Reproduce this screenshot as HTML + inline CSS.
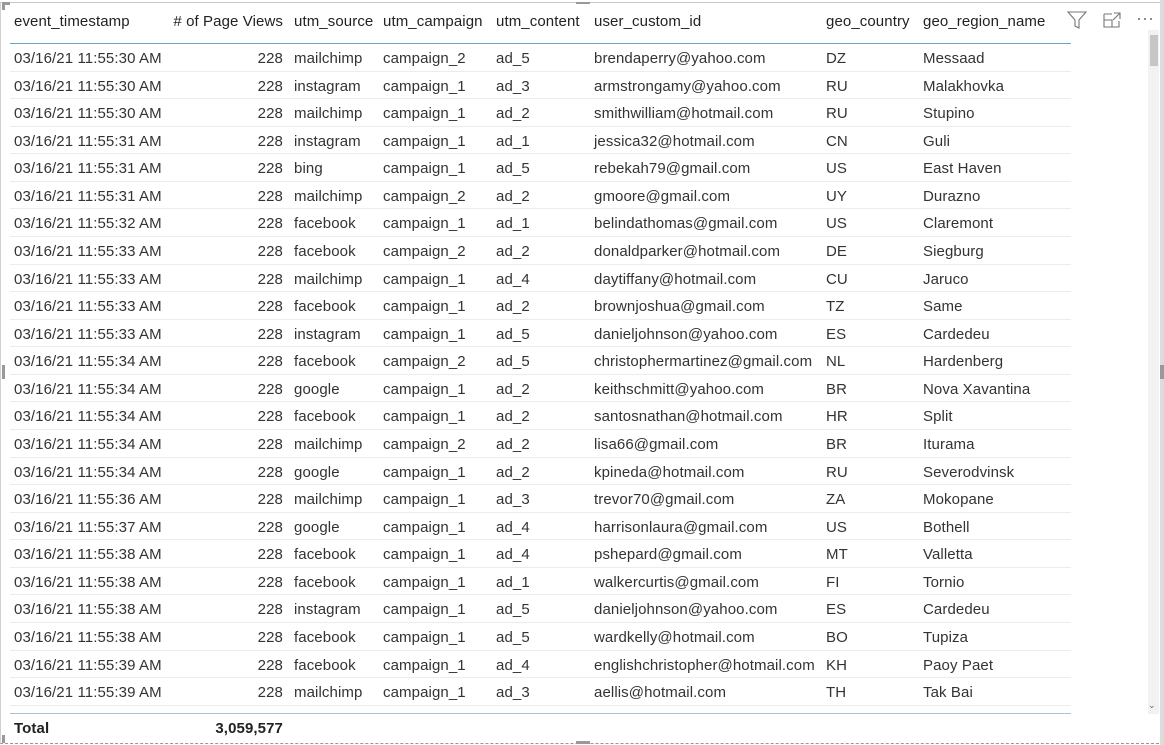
<!DOCTYPE html>
<html><head><meta charset="utf-8"><style>
*{margin:0;padding:0;box-sizing:border-box}
body{width:1164px;height:745px;background:#fff;position:relative;overflow:hidden;font-family:"Liberation Sans",sans-serif;font-size:15px;letter-spacing:0.1px;color:#333}
.frame{position:absolute;left:0;top:2px;width:1164px;height:742px;border-top:1px solid #c8c8c8;border-left:1px solid #d0d0d0;border-bottom:1px dashed #999}
.r{position:absolute;left:10px;width:1061px;height:27.57px;border-bottom:1px solid #ececec}
.r span{position:absolute;top:1px;line-height:27px;white-space:nowrap}
.c1{left:4px}.c2{right:788px;text-align:right}.c3{left:284px}.c4{left:373px}.c5{left:486px}.c6{left:584px}.c7{left:816px}.c8{left:913px}
.h{top:6px;height:38px;border-bottom:1.5px solid #6aa4c6;color:#222}
.h span{line-height:30px}
.t{top:713px;height:28px;border-top:1px solid #9fc6da;border-bottom:none;font-weight:bold;color:#222}
.sb{position:absolute;left:1148px;top:30px;width:11px;height:684px;background:#f2f2f2}
.th{position:absolute;left:1150px;top:35px;width:8px;height:31px;background:#c6c6c6}
.edge{position:absolute;left:1160px;top:0;width:4px;height:745px;background:#dcdcdc}
</style></head><body>
<div class="frame"></div>
<div class="edge"></div>
<div style="position:absolute;left:2px;top:2px;width:8px;height:3px;background:#999"></div>
<div style="position:absolute;left:2px;top:2px;width:3px;height:8px;background:#999"></div>
<div style="position:absolute;left:2px;top:735px;width:3px;height:8px;background:#999"></div>
<div style="position:absolute;left:2px;top:365px;width:3px;height:14px;background:#999"></div>
<div style="position:absolute;left:1160px;top:365px;width:4px;height:14px;background:#999"></div>
<div style="position:absolute;left:576px;top:741px;width:14px;height:3px;background:#999"></div>
<div style="position:absolute;left:576px;top:2px;width:14px;height:2px;background:#999"></div>
<div class="sb"></div><div class="th"></div>
<div style="position:absolute;left:1148px;top:700px;font-size:9px;color:#666">&#8964;</div>
<svg style="position:absolute;left:1066px;top:10px" width="90" height="20" viewBox="0 0 90 20">
<path d="M2 2 H20 L13 10 V18 L9 16 V10 Z" fill="none" stroke="#777" stroke-width="1.1"/>
<path d="M38 4 H46 M38 4 V17 H53 V11 M38 10 H46 V17 M48 3 H54 V9 M54 3 L47 10" fill="none" stroke="#777" stroke-width="1.1"/>
<circle cx="73" cy="9" r="1" fill="#666"/><circle cx="79" cy="9" r="1" fill="#666"/><circle cx="85" cy="9" r="1" fill="#666"/>
</svg>
<div class="r h"><span class="c1">event_timestamp</span><span class="c2"># of Page Views</span><span class="c3">utm_source</span><span class="c4">utm_campaign</span><span class="c5">utm_content</span><span class="c6">user_custom_id</span><span class="c7">geo_country</span><span class="c8">geo_region_name</span></div>
<div class="r" style="top:44.0px"><span class="c1">03/16/21 11:55:30 AM</span><span class="c2">228</span><span class="c3">mailchimp</span><span class="c4">campaign_2</span><span class="c5">ad_5</span><span class="c6">brendaperry@yahoo.com</span><span class="c7">DZ</span><span class="c8">Messaad</span></div>
<div class="r" style="top:71.6px"><span class="c1">03/16/21 11:55:30 AM</span><span class="c2">228</span><span class="c3">instagram</span><span class="c4">campaign_1</span><span class="c5">ad_3</span><span class="c6">armstrongamy@yahoo.com</span><span class="c7">RU</span><span class="c8">Malakhovka</span></div>
<div class="r" style="top:99.1px"><span class="c1">03/16/21 11:55:30 AM</span><span class="c2">228</span><span class="c3">mailchimp</span><span class="c4">campaign_1</span><span class="c5">ad_2</span><span class="c6">smithwilliam@hotmail.com</span><span class="c7">RU</span><span class="c8">Stupino</span></div>
<div class="r" style="top:126.7px"><span class="c1">03/16/21 11:55:31 AM</span><span class="c2">228</span><span class="c3">instagram</span><span class="c4">campaign_1</span><span class="c5">ad_1</span><span class="c6">jessica32@hotmail.com</span><span class="c7">CN</span><span class="c8">Guli</span></div>
<div class="r" style="top:154.3px"><span class="c1">03/16/21 11:55:31 AM</span><span class="c2">228</span><span class="c3">bing</span><span class="c4">campaign_1</span><span class="c5">ad_5</span><span class="c6">rebekah79@gmail.com</span><span class="c7">US</span><span class="c8">East Haven</span></div>
<div class="r" style="top:181.9px"><span class="c1">03/16/21 11:55:31 AM</span><span class="c2">228</span><span class="c3">mailchimp</span><span class="c4">campaign_2</span><span class="c5">ad_2</span><span class="c6">gmoore@gmail.com</span><span class="c7">UY</span><span class="c8">Durazno</span></div>
<div class="r" style="top:209.4px"><span class="c1">03/16/21 11:55:32 AM</span><span class="c2">228</span><span class="c3">facebook</span><span class="c4">campaign_1</span><span class="c5">ad_1</span><span class="c6">belindathomas@gmail.com</span><span class="c7">US</span><span class="c8">Claremont</span></div>
<div class="r" style="top:237.0px"><span class="c1">03/16/21 11:55:33 AM</span><span class="c2">228</span><span class="c3">facebook</span><span class="c4">campaign_2</span><span class="c5">ad_2</span><span class="c6">donaldparker@hotmail.com</span><span class="c7">DE</span><span class="c8">Siegburg</span></div>
<div class="r" style="top:264.6px"><span class="c1">03/16/21 11:55:33 AM</span><span class="c2">228</span><span class="c3">mailchimp</span><span class="c4">campaign_1</span><span class="c5">ad_4</span><span class="c6">daytiffany@hotmail.com</span><span class="c7">CU</span><span class="c8">Jaruco</span></div>
<div class="r" style="top:292.1px"><span class="c1">03/16/21 11:55:33 AM</span><span class="c2">228</span><span class="c3">facebook</span><span class="c4">campaign_1</span><span class="c5">ad_2</span><span class="c6">brownjoshua@gmail.com</span><span class="c7">TZ</span><span class="c8">Same</span></div>
<div class="r" style="top:319.7px"><span class="c1">03/16/21 11:55:33 AM</span><span class="c2">228</span><span class="c3">instagram</span><span class="c4">campaign_1</span><span class="c5">ad_5</span><span class="c6">danieljohnson@yahoo.com</span><span class="c7">ES</span><span class="c8">Cardedeu</span></div>
<div class="r" style="top:347.3px"><span class="c1">03/16/21 11:55:34 AM</span><span class="c2">228</span><span class="c3">facebook</span><span class="c4">campaign_2</span><span class="c5">ad_5</span><span class="c6">christophermartinez@gmail.com</span><span class="c7">NL</span><span class="c8">Hardenberg</span></div>
<div class="r" style="top:374.8px"><span class="c1">03/16/21 11:55:34 AM</span><span class="c2">228</span><span class="c3">google</span><span class="c4">campaign_1</span><span class="c5">ad_2</span><span class="c6">keithschmitt@yahoo.com</span><span class="c7">BR</span><span class="c8">Nova Xavantina</span></div>
<div class="r" style="top:402.4px"><span class="c1">03/16/21 11:55:34 AM</span><span class="c2">228</span><span class="c3">facebook</span><span class="c4">campaign_1</span><span class="c5">ad_2</span><span class="c6">santosnathan@hotmail.com</span><span class="c7">HR</span><span class="c8">Split</span></div>
<div class="r" style="top:430.0px"><span class="c1">03/16/21 11:55:34 AM</span><span class="c2">228</span><span class="c3">mailchimp</span><span class="c4">campaign_2</span><span class="c5">ad_2</span><span class="c6">lisa66@gmail.com</span><span class="c7">BR</span><span class="c8">Iturama</span></div>
<div class="r" style="top:457.6px"><span class="c1">03/16/21 11:55:34 AM</span><span class="c2">228</span><span class="c3">google</span><span class="c4">campaign_1</span><span class="c5">ad_2</span><span class="c6">kpineda@hotmail.com</span><span class="c7">RU</span><span class="c8">Severodvinsk</span></div>
<div class="r" style="top:485.1px"><span class="c1">03/16/21 11:55:36 AM</span><span class="c2">228</span><span class="c3">mailchimp</span><span class="c4">campaign_1</span><span class="c5">ad_3</span><span class="c6">trevor70@gmail.com</span><span class="c7">ZA</span><span class="c8">Mokopane</span></div>
<div class="r" style="top:512.7px"><span class="c1">03/16/21 11:55:37 AM</span><span class="c2">228</span><span class="c3">google</span><span class="c4">campaign_1</span><span class="c5">ad_4</span><span class="c6">harrisonlaura@gmail.com</span><span class="c7">US</span><span class="c8">Bothell</span></div>
<div class="r" style="top:540.3px"><span class="c1">03/16/21 11:55:38 AM</span><span class="c2">228</span><span class="c3">facebook</span><span class="c4">campaign_1</span><span class="c5">ad_4</span><span class="c6">pshepard@gmail.com</span><span class="c7">MT</span><span class="c8">Valletta</span></div>
<div class="r" style="top:567.8px"><span class="c1">03/16/21 11:55:38 AM</span><span class="c2">228</span><span class="c3">facebook</span><span class="c4">campaign_1</span><span class="c5">ad_1</span><span class="c6">walkercurtis@gmail.com</span><span class="c7">FI</span><span class="c8">Tornio</span></div>
<div class="r" style="top:595.4px"><span class="c1">03/16/21 11:55:38 AM</span><span class="c2">228</span><span class="c3">instagram</span><span class="c4">campaign_1</span><span class="c5">ad_5</span><span class="c6">danieljohnson@yahoo.com</span><span class="c7">ES</span><span class="c8">Cardedeu</span></div>
<div class="r" style="top:623.0px"><span class="c1">03/16/21 11:55:38 AM</span><span class="c2">228</span><span class="c3">facebook</span><span class="c4">campaign_1</span><span class="c5">ad_5</span><span class="c6">wardkelly@hotmail.com</span><span class="c7">BO</span><span class="c8">Tupiza</span></div>
<div class="r" style="top:650.5px"><span class="c1">03/16/21 11:55:39 AM</span><span class="c2">228</span><span class="c3">facebook</span><span class="c4">campaign_1</span><span class="c5">ad_4</span><span class="c6">englishchristopher@hotmail.com</span><span class="c7">KH</span><span class="c8">Paoy Paet</span></div>
<div class="r" style="top:678.1px"><span class="c1">03/16/21 11:55:39 AM</span><span class="c2">228</span><span class="c3">mailchimp</span><span class="c4">campaign_1</span><span class="c5">ad_3</span><span class="c6">aellis@hotmail.com</span><span class="c7">TH</span><span class="c8">Tak Bai</span></div>
<div class="r t"><span class="c1">Total</span><span class="c2">3,059,577</span></div>
</body></html>
